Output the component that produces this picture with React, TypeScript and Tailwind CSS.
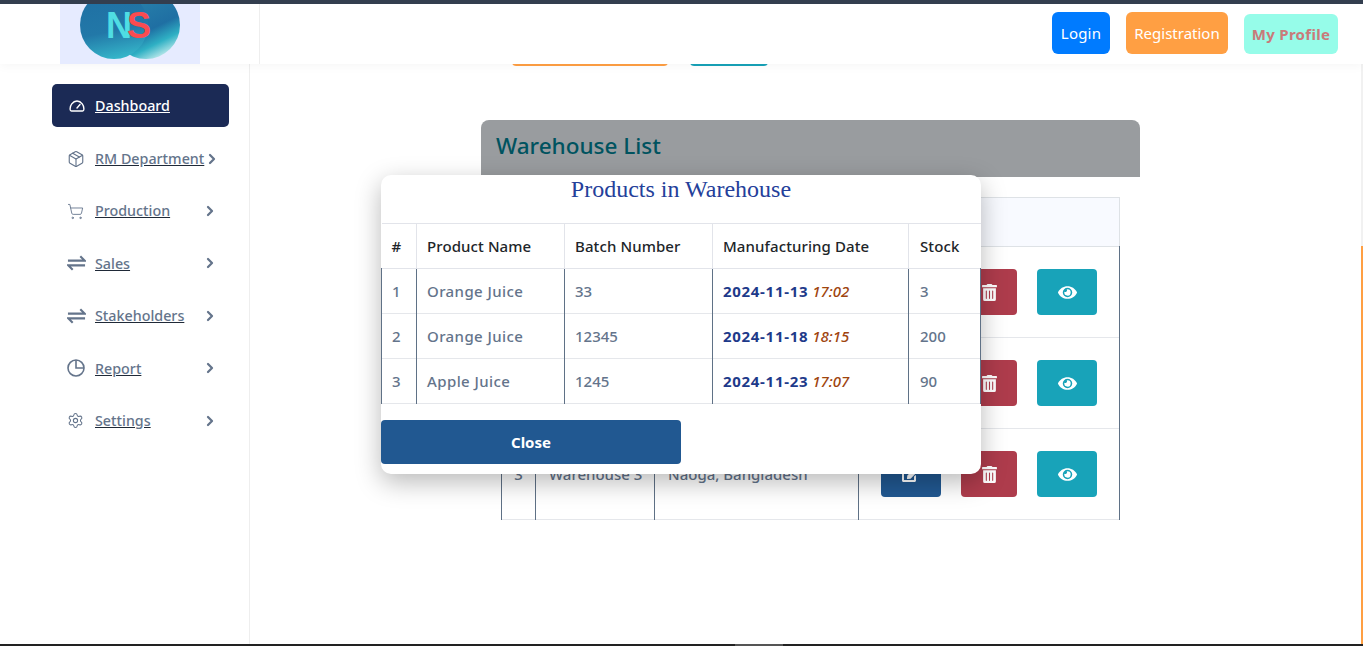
import React from 'react';
import { ChevronRight, Package, Settings, ShoppingCart } from 'lucide-react';
import { FaEdit, FaEye, FaTrashAlt } from 'react-icons/fa';

function GaugeIcon() {
  return (
    <svg viewBox="0 0 16 12" className="w-[16px] h-[12px]" fill="none" stroke="white" strokeWidth="1.4">
      <path d="M2.5 11h11c.7 0 1-.4 1.2-1 .9-4.500-2.600-9-6.700-9S.4 5.500 1.300 10c.2.6.5 1 1.200 1z" />
      <path d="M8 8l3-3.500" strokeLinecap="round" />
    </svg>
  );
}

function SwapIcon() {
  return (
    <svg viewBox="0 0 20 16" className="w-[19px] h-[16px]" fill="none" stroke="#64748b" strokeWidth="2.2">
      <path d="M1 5.500h17.500L14 1" />
      <path d="M19 10.500H1.500L6 15" />
    </svg>
  );
}

function PieIcon() {
  return (
    <svg viewBox="0 0 18 18" className="w-[18px] h-[18px]" fill="none" stroke="#64748b" strokeWidth="1.6">
      <circle cx="9" cy="9" r="8" />
      <path d="M9 1v8h8" />
    </svg>
  );
}

const menu = [
  { label: 'RM Department', icon: <Package size={18} strokeWidth={1.5} color="#64748b" /> },
  { label: 'Production', icon: <ShoppingCart size={17} strokeWidth={1.25} color="#64748b" /> },
  { label: 'Sales', icon: <SwapIcon /> },
  { label: 'Stakeholders', icon: <SwapIcon /> },
  { label: 'Report', icon: <PieIcon /> },
  { label: 'Settings', icon: <Settings size={17} strokeWidth={1.5} color="#64748b" /> },
];

// rows 1 and 2 sit behind the modal, only the buttons show
const warehouses = [
  { key: 'a', id: '', name: '', location: '' },
  { key: 'b', id: '', name: '', location: '' },
  { key: 'c', id: '3', name: 'Warehouse 3', location: 'Naoga, Bangladesh' },
];

const products = [
  { id: 1, name: 'Orange Juice', batch: '33', date: '2024-11-13', time: '17:02', stock: 3 },
  { id: 2, name: 'Orange Juice', batch: '12345', date: '2024-11-18', time: '18:15', stock: 200 },
  { id: 3, name: 'Apple Juice', batch: '1245', date: '2024-11-23', time: '17:07', stock: 90 },
];

function Logo() {
  return (
    <svg viewBox="0 0 140 60" className="w-[140px] h-[60px] block">
      <defs>
        <linearGradient id="left" x1="0.3" y1="0" x2="0.5" y2="1">
          <stop offset="0" stopColor="#1f6fa3" />
          <stop offset="0.6" stopColor="#2278a8" />
          <stop offset="1" stopColor="#35b5c9" />
        </linearGradient>
        <linearGradient id="right" x1="0.2" y1="0" x2="0.7" y2="1">
          <stop offset="0" stopColor="#2a86ad" />
          <stop offset="0.6" stopColor="#1f6fa3" />
          <stop offset="0.8" stopColor="#2fb0c4" />
          <stop offset="1" stopColor="#c8eeee" />
        </linearGradient>
      </defs>
      <rect width="140" height="60" fill="#e6ebff" />
      <circle cx="86" cy="21" r="34" fill="url(#right)" />
      <circle cx="54" cy="21" r="34" fill="url(#left)" />
      <text x="46" y="34" fontFamily="Liberation Sans, sans-serif" fontWeight="700" fontSize="36" letterSpacing="-5">
        <tspan fill="#4fdde3">N</tspan>
        <tspan fill="#fa4b50">S</tspan>
      </text>
    </svg>
  );
}

export default function App() {
  return (
    <div className="relative flex flex-col w-full h-[646px] overflow-hidden bg-white font-['Noto_Sans',sans-serif] text-[15px]">
      <div className="h-[4px] bg-[#343f50] shrink-0" />

      {/* Header */}
      <header className="relative z-10 flex items-start h-[60px] shrink-0 bg-white shadow-[0_2px_10px_rgba(0,0,0,0.04)]">
        <div className="w-[260px] h-full pl-[60px] border-r border-[#eeeeee]">
          <Logo />
        </div>
        <div className="flex-1 flex justify-end gap-4 pr-[25px] pt-2">
          <button className="w-[58px] h-[42px] rounded-md bg-[#007bff] text-white tracking-[0.200px]">Login</button>
          <button className="w-[102px] h-[42px] rounded-md bg-[#ff9f43] text-white">Registration</button>
          <button className="w-[94px] h-[40px] mt-[2px] rounded-md bg-[#96fce9] text-[#c97a7a] font-bold tracking-[0.300px]">My Profile</button>
        </div>
      </header>

      <div className="flex flex-1 min-h-0">
        {/* Sidebar */}
        <aside className="w-[250px] shrink-0 border-r border-[#eeeeee] pt-5 pl-[52px] pr-5 text-[14.300px]">
          <a className="flex items-center h-[43px] pl-[17px] rounded-[5px] bg-[#1b2a55] text-white font-medium underline">
            <span className="w-[26px] flex"><GaugeIcon /></span>
            Dashboard
          </a>
          <div className="pt-[5.500px]">
            {menu.map(item => (
              <a key={item.label} className="flex items-center h-[52.400px] pl-[15px] pr-[11px] text-[#64748b] font-medium">
                <span className="w-7 flex shrink-0">{item.icon}</span>
                <span className="flex-1 underline decoration-[#1f2937] whitespace-nowrap">{item.label}</span>
                <ChevronRight size={16} strokeWidth={3.400} className="shrink-0" />
              </a>
            ))}
          </div>
        </aside>

        {/* Page */}
        <main className="flex-1 min-w-0 overflow-hidden">
          <div className="flex gap-[22px] pl-[262px] -mt-[38px]">
            <div className="w-[156px] h-[40px] rounded bg-[#ff9f43]" />
            <div className="w-[78px] h-[40px] rounded bg-[#17a2b8]" />
          </div>
          <section className="ml-[231px] w-[659px] mt-[54px]">
            <h2 className="h-[57px] px-[15px] pt-[9px] rounded-t-lg bg-[#999c9f] text-[#00535f] text-[22.500px] leading-[34px] font-medium">
              Warehouse List
            </h2>
            <div className="px-5 pt-5">
              <table className="w-[619px] table-fixed border-collapse">
                <thead>
                  <tr className="h-[49px] bg-[#f8faff] border border-[#dee2e6]">
                    <th className="w-[34px]" />
                    <th className="w-[119px]" />
                    <th className="w-[204px]" />
                    <th />
                  </tr>
                </thead>
                <tbody>
                  {warehouses.map(w => (
                    <tr key={w.key} className="h-[91px] border-b border-[#e5e7eb] text-[#64748b] font-medium">
                      <td className="border-x border-x-[#5f7186] text-center">{w.id}</td>
                      <td className="border-r border-r-[#5f7186] pl-[13px] whitespace-nowrap">{w.name}</td>
                      <td className="border-r border-r-[#5f7186] pl-[13px] whitespace-nowrap">{w.location}</td>
                      <td className="border-r border-r-[#5f7186] pl-[22px]">
                        <div className="flex gap-5">
                          <button className="w-[60px] h-[46px] rounded bg-[#215891] text-white flex items-center justify-center"><FaEdit size={18} /></button>
                          <button className="w-[56px] h-[46px] rounded bg-[#ae3c4c] text-white flex items-center justify-center"><FaTrashAlt size={17} /></button>
                          <button className="w-[60px] h-[46px] rounded bg-[#18a3b9] text-white flex items-center justify-center"><FaEye size={19} /></button>
                        </div>
                      </td>
                    </tr>
                  ))}
                </tbody>
              </table>
            </div>
          </section>
        </main>

        {/* Scrollbar */}
        <div className="w-[2px] shrink-0 flex flex-col bg-[#f1f1f1]">
          <div className="h-[182px] shrink-0" />
          <div className="flex-1 bg-[#ff9f43]" />
        </div>
      </div>

      <div className="h-[2px] shrink-0 flex bg-[#222222]">
        <div className="w-[735px]" />
        <div className="w-[48px] bg-[#555555]" />
      </div>

      {/* Modal */}
      <div className="absolute z-20 left-[381px] top-[175px] w-[600px] h-[299px] rounded-[10px] bg-white shadow-[0_8px_26px_rgba(0,0,0,0.28)]">
        <h3 className="h-[48px] text-center font-['Liberation_Serif',serif] text-[24px] leading-[28px] text-[#24409a]">
          Products in Warehouse
        </h3>
        <table className="w-[600px] table-fixed border-collapse">
          <thead>
            <tr className="h-[45px] border-y border-[#e2e4ea] text-left text-[#212529] tracking-[0.100px]">
              <th className="w-[35px] pl-[10px] font-medium border-r border-[#e2e4ea]">#</th>
              <th className="w-[148px] pl-[10px] font-medium border-r border-[#e2e4ea]">Product Name</th>
              <th className="w-[148px] pl-[10px] font-medium border-r border-[#e2e4ea]">Batch Number</th>
              <th className="w-[196px] pl-[10px] font-medium border-r border-[#e2e4ea]">Manufacturing Date</th>
              <th className="pl-[11px] font-medium">Stock</th>
            </tr>
          </thead>
          <tbody>
            {products.map(p => (
              <tr key={p.id} className="h-[45px] border-b border-[#e5e7eb] text-[#64748b] font-medium">
                <td className="pl-[10px] border-x border-x-[#5f7186]">{p.id}</td>
                <td className="pl-[10px] border-r border-r-[#5f7186] tracking-[0.400px]">{p.name}</td>
                <td className="pl-[10px] border-r border-r-[#5f7186]">{p.batch}</td>
                <td className="pl-[10px] border-r border-r-[#5f7186] whitespace-nowrap">
                  <span className="font-bold text-[#1e3a8a] tracking-[0.700px]">{p.date}</span>{' '}
                  <em className="text-[#a0450f]">{p.time}</em>
                </td>
                <td className="pl-[11px] border-r border-r-[#5f7186]">{p.stock}</td>
              </tr>
            ))}
          </tbody>
        </table>
        <button className="block mt-4 w-[300px] h-[44px] rounded bg-[#215891] text-white font-bold">Close</button>
      </div>
    </div>
  );
}
